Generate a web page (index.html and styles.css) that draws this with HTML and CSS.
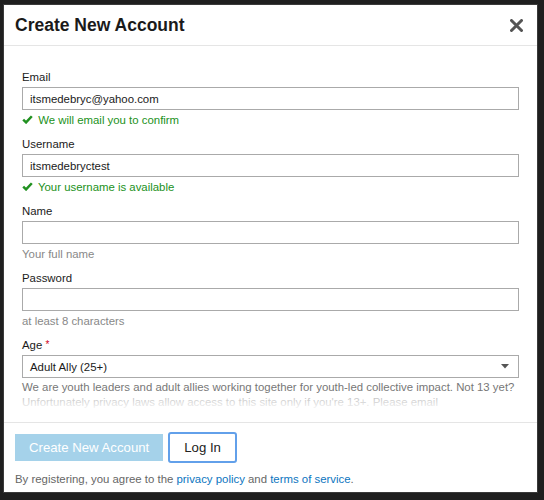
FILE: index.html
```html
<!DOCTYPE html>
<html>
<head>
  <title>Create New Account</title>
  <link rel="stylesheet" href="styles.css">
</head>
<body>
  <div class="modal">
    <div class="modal-header">
      <h2 class="modal-title">Create New Account</h2>
      <button class="close" aria-label="Close">
        <svg width="13" height="13" viewBox="0 0 13 13"><path d="M1.5 1.5 L11.5 11.5 M11.5 1.5 L1.5 11.5" stroke="#555" stroke-width="3" stroke-linecap="round"/></svg>
      </button>
    </div>

    <div class="modal-body">
      <div class="field">
        <label>Email</label>
        <input type="text" value="itsmedebryc@yahoo.com">
        <div class="hint good">
          <svg width="11" height="9" viewBox="0 0 12 10"><path d="M1.2 5.2 L4.4 8.2 L10.8 1.4" fill="none" stroke="currentColor" stroke-width="2.8"/></svg>
          We will email you to confirm
        </div>
      </div>

      <div class="field">
        <label>Username</label>
        <input type="text" value="itsmedebryctest">
        <div class="hint good">
          <svg width="11" height="9" viewBox="0 0 12 10"><path d="M1.2 5.2 L4.4 8.2 L10.8 1.4" fill="none" stroke="currentColor" stroke-width="2.8"/></svg>
          Your username is available
        </div>
      </div>

      <div class="field">
        <label>Name</label>
        <input type="text">
        <div class="hint">Your full name</div>
      </div>

      <div class="field">
        <label>Password</label>
        <input type="password">
        <div class="hint">at least 8 characters</div>
      </div>

      <div class="field">
        <label>Age <span class="required">*</span></label>
        <div class="select">
          <span>Adult Ally (25+)</span>
          <svg width="8" height="5" viewBox="0 0 8 5"><path d="M0 0 L8 0 L4 4.5 Z" fill="#555"/></svg>
        </div>
        <div class="hint about">We are youth leaders and adult allies working together for youth-led collective impact. Not 13 yet? Unfortunately privacy laws allow access to this site only if you're 13+. Please email<br>us and we will let you know when you can join.</div>
      </div>
    </div>

    <div class="modal-footer">
      <div class="actions">
        <button class="btn btn-primary">Create New Account</button>
        <button class="btn btn-login">Log In</button>
      </div>
      <p class="terms">By registering, you agree to the <a href="#">privacy policy</a> and <a href="#">terms of service</a>.</p>
    </div>
  </div>
</body>
</html>
```

FILE: styles.css
```css
html, body {
  height: 100%;
  margin: 0;
  background: #1f1f1f;
}

body {
  padding: 5px 0 0 4px;
  box-sizing: border-box;
  font-family: "Liberation Sans", Arial, sans-serif;
  color: #222;
}

.modal {
  width: 533px;
  height: 487px;
  background: #fff;
  box-shadow: 0 0 0 1px #3a3a3a;
  display: flex;
  flex-direction: column;
}

.modal-header {
  height: 40px;
  border-bottom: 1px solid #e5e5e5;
  display: flex;
  align-items: center;
  justify-content: space-between;
  padding: 0 14px 0 11px;
}

.modal-title {
  margin: 0;
  font-size: 17.5px;
  font-weight: bold;
  color: #1a1a1a;
}

.close {
  border: none;
  background: none;
  padding: 0;
  display: flex;
}

.modal-body {
  height: 376px;
  overflow: hidden;
  position: relative;
  padding: 23px 18px 0;
  box-sizing: border-box;
}

.modal-body::after {
  content: "";
  position: absolute;
  left: 0;
  right: 0;
  bottom: 0;
  height: 28px;
  background: linear-gradient(rgba(255, 255, 255, 0.45), #fff 60%);
}

.field {
  margin-bottom: 7px;
}

.field label {
  display: block;
  font-size: 11.4px;
  line-height: 16px;
  margin-bottom: 2px;
  color: #1a1a1a;
}

.required {
  color: #d0021b;
  font-size: 10px;
  vertical-align: top;
}

.field input {
  display: block;
  width: 100%;
  height: 23px;
  box-sizing: border-box;
  border: 1px solid #aaa;
  padding: 0 7px;
  font: 11.4px "Liberation Sans", Arial, sans-serif;
  color: #1a1a1a;
  outline: none;
}

.select {
  height: 23px;
  box-sizing: border-box;
  border: 1px solid #aaa;
  padding: 0 9px 0 7px;
  display: flex;
  align-items: center;
  justify-content: space-between;
  font-size: 11.4px;
  color: #1a1a1a;
}

.hint {
  font-size: 11.4px;
  line-height: 17px;
  margin-top: 2px;
  color: #888;
}

.hint.good {
  color: #219121;
}

.hint.good svg {
  margin-right: 2px;
}

.hint.about {
  line-height: 15px;
  margin-top: 2px;
  color: #777;
}

.modal-footer {
  border-top: 1px solid #e5e5e5;
  padding: 9px 11px 0;
}

.actions {
  display: flex;
  align-items: center;
  gap: 5px;
}

.btn {
  font-family: "Liberation Sans", Arial, sans-serif;
  font-size: 13.2px;
  cursor: pointer;
}

.btn-primary {
  height: 27px;
  padding: 0 14px;
  border: none;
  background: #a5d2ea;
  color: #fff;
}

.btn-login {
  height: 31px;
  padding: 0 14px;
  background: #fff;
  color: #222;
  border: 2px solid #62a0ea;
  border-radius: 3px;
}

.terms {
  margin: 10px 0 0;
  font-size: 11.4px;
  color: #666;
}

.terms a {
  color: #0b75c0;
  text-decoration: none;
}
```
